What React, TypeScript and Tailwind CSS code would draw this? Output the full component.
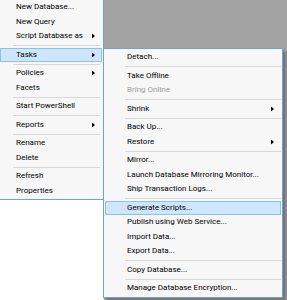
import React from 'react';

type Entry = { label?: string; sep?: boolean; arrow?: boolean; active?: boolean; disabled?: boolean };

const mainMenu: Entry[] = [
  { label: 'New Database...' },
  { label: 'New Query' },
  { label: 'Script Database as', arrow: true },
  { sep: true },
  { label: 'Tasks', arrow: true, active: true },
  { sep: true },
  { label: 'Policies', arrow: true },
  { label: 'Facets' },
  { sep: true },
  { label: 'Start PowerShell' },
  { sep: true },
  { label: 'Reports', arrow: true },
  { sep: true },
  { label: 'Rename' },
  { label: 'Delete' },
  { sep: true },
  { label: 'Refresh' },
  { label: 'Properties' },
];

const tasksMenu: Entry[] = [
  { label: 'Detach...' },
  { sep: true },
  { label: 'Take Offline' },
  { label: 'Bring Online', disabled: true },
  { sep: true },
  { label: 'Shrink', arrow: true },
  { sep: true },
  { label: 'Back Up...' },
  { label: 'Restore', arrow: true },
  { sep: true },
  { label: 'Mirror...' },
  { label: 'Launch Database Mirroring Monitor...' },
  { label: 'Ship Transaction Logs...' },
  { sep: true },
  { label: 'Generate Scripts...', active: true },
  { label: 'Publish using Web Service...' },
  { label: 'Import Data...' },
  { label: 'Export Data...' },
  { sep: true },
  { label: 'Copy Database...' },
  { sep: true },
  { label: 'Manage Database Encryption...' },
];

// tiny black submenu triangle
const Arrow = () => (
  <svg width="3" height="5" viewBox="0 0 3 5" className="absolute right-[6px] top-1/2 -translate-y-1/2">
    <polygon points="0,0 3,2.5 0,5" fill="#000" />
  </svg>
);

function MenuList({ items, textPad, sepClass }: { items: Entry[]; textPad: string; sepClass: string }) {
  return (
    <>
      {items.map((it, i) =>
        it.sep ? (
          <div key={i} className="h-[4px] flex flex-col justify-center">
            <div className={`h-px bg-[#d7d7d7] ${sepClass}`} />
          </div>
        ) : (
          <div
            key={i}
            className={`relative h-[14.5px] flex items-center border ${textPad} ${
              it.active ? 'bg-[#cde6fb] border-[#8cc0ef]' : 'border-transparent'
            } ${it.disabled ? 'text-[#9d9d9d]' : 'text-black'}`}
          >
            <span className="text-[8px] leading-none whitespace-nowrap">{it.label}</span>
            {it.arrow && <Arrow />}
          </div>
        )
      )}
    </>
  );
}

export default function App() {
  return (
    <div className="flex w-[287px] h-[300px] overflow-hidden bg-white font-['Roboto',sans-serif]">
      {/* context menu */}
      <div className="w-[104px] shrink-0">
        <div className="bg-[#f7f7f7] border-r border-b border-[#6ea1df] pr-px pb-px">
          <MenuList items={mainMenu} textPad="pl-[15px]" sepClass="ml-[13px] mr-[2px]" />
        </div>
      </div>

      {/* tasks submenu over the grey backdrop */}
      <div className="flex-1 bg-[#a3a3a3] pt-[48px]">
        <div className="-ml-px w-[180px] bg-[#f7f7f7] border border-[#6ea1df] p-px shadow-[3px_3px_3px_rgba(0,0,0,0.3)]">
          <MenuList items={tasksMenu} textPad="pl-[21px]" sepClass="ml-[20px]" />
        </div>
      </div>
    </div>
  );
}
